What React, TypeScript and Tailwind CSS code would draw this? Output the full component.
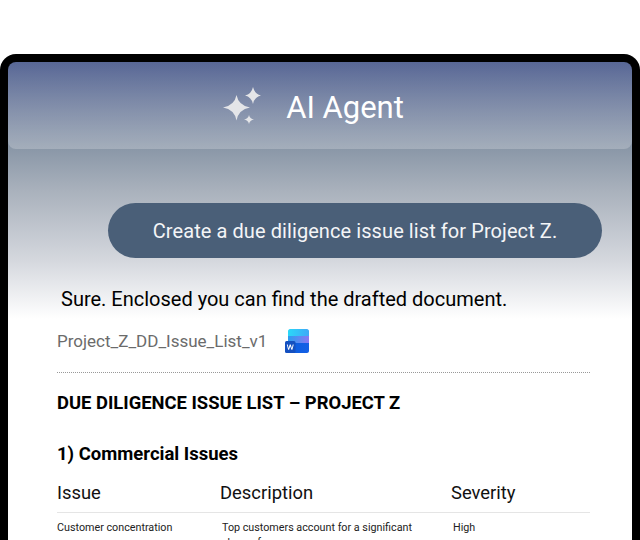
const SparklesIcon = () => (
  <svg width="40" height="40" viewBox="0 0 40 40" className="shrink-0">
    <path d="M14.500 9Q16.500 19.500 28 21.500Q16.500 23.500 14.500 34.500Q12.500 23.500 1 21.500Q12.500 19.500 14.500 9Z" fill="#e4e5e8" />
    <path d="M31 1Q32.500 8 39 9.500Q32.500 11 31 18Q29.500 11 23 9.500Q29.500 8 31 1Z" fill="#e4e5e8" />
    <path d="M27 29Q27.800 32.700 32 33.500Q27.800 34.300 27 38Q26.200 34.300 22 33.500Q26.200 32.700 27 29Z" fill="#e4e5e8" />
  </svg>
);

const WordIcon = () => (
  <svg width="24" height="24" viewBox="0 0 24 24" className="shrink-0">
    <defs>
      <linearGradient id="word-top" x1="0" y1="0" x2="1" y2="0">
        <stop offset="0" stopColor="#2bd8f8" />
        <stop offset="1" stopColor="#3fa8f7" />
      </linearGradient>
      <linearGradient id="word-mid" x1="0" y1="0" x2="1" y2="0">
        <stop offset="0" stopColor="#2a9cf0" />
        <stop offset="1" stopColor="#8a78f2" />
      </linearGradient>
      <linearGradient id="word-low" x1="0" y1="0" x2="1" y2="0">
        <stop offset="0" stopColor="#0a5cdc" />
        <stop offset="1" stopColor="#1460e6" />
      </linearGradient>
    </defs>
    <path d="M3 2C3 1 4 0 5 0H22C23 0 24 1 24 2V7H3Z" fill="url(#word-top)" />
    <rect x="3" y="7" width="21" height="7" fill="url(#word-mid)" />
    <path d="M3 14H24V22C24 23 23 24 22 24H5C4 24 3 23 3 22Z" fill="url(#word-low)" />
    <rect x="0" y="12" width="10.500" height="12" rx="1.500" fill="#1450c0" />
    <path d="M1.800 15.500L3.100 20.800H4.100L5.250 17.200L6.400 20.800H7.400L8.700 15.500H7.700L6.900 19.200L5.800 15.500H4.700L3.600 19.200L2.800 15.500Z" fill="#ffffff" />
  </svg>
);

export default function App() {
  return (
    <div className="h-[540px] w-[640px] overflow-hidden bg-white pt-[54px] font-['Roboto',sans-serif]">
      <div className="h-[486px] rounded-t-[16px] bg-black px-2 pt-2">
        <div className="h-full rounded-t-[8px] bg-white bg-[linear-gradient(180deg,#586796_0%,#8b98a8_33.500%,#a9b1bc_49%,#d5d8de_76%,#ffffff_98%)] bg-[length:100%_262px] bg-no-repeat">
          <div className="flex h-[87px] items-center justify-center gap-[24px] rounded-[8px] bg-[linear-gradient(180deg,rgba(255,255,255,0)_0%,rgba(255,255,255,0.22)_100%)] pr-[14px]">
            <SparklesIcon />
            <span className="pt-[3px] text-[31px] leading-none text-white">AI Agent</span>
          </div>

          <div className="flex justify-end pr-[30px] pt-[54px]">
            <div className="flex h-[55px] w-[494px] items-center justify-center rounded-full bg-[#4a5f78] text-[20px] tracking-[0.08px] text-[#f4f5f7]">
              Create a due diligence issue list for Project Z.
            </div>
          </div>

          <p className="pl-[53px] pt-[27px] text-[20px] leading-[28px] text-black">
            Sure. Enclosed you can find the drafted document.
          </p>

          <div className="mt-[16px] flex h-[24px] items-center gap-[18px] pl-[49px] text-[17px] text-[#6b6b6b]">
            <span className="pt-[2px]">Project_Z_DD_Issue_List_v1</span>
            <WordIcon />
          </div>

          <div className="mt-[19px] ml-[49px] w-[533px] border-b border-dotted border-[#999]" />

          <h1 className="pl-[49px] pt-[19px] text-[18.400px] font-bold leading-[21px] text-black">
            DUE DILIGENCE ISSUE LIST – PROJECT Z
          </h1>

          <h2 className="pl-[49px] pt-[31px] text-[18.500px] font-bold leading-[21px] text-black">
            1) Commercial Issues
          </h2>

          <div className="mt-[17px] ml-[49px] grid w-[533px] grid-cols-[163px_231px_1fr] border-b border-[#e5e5e5] pb-[9px] text-[18.400px] leading-[21px] text-[#111]">
            <span>Issue</span>
            <span>Description</span>
            <span>Severity</span>
          </div>

          <div className="ml-[49px] grid w-[533px] grid-cols-[165px_231px_1fr] pt-[7px] text-[10.750px] leading-[15px] text-[#222]">
            <span>Customer concentration</span>
            <span className="w-[200px]">Top customers account for a significant share of revenue</span>
            <span>High</span>
          </div>
        </div>
      </div>
    </div>
  );
}
